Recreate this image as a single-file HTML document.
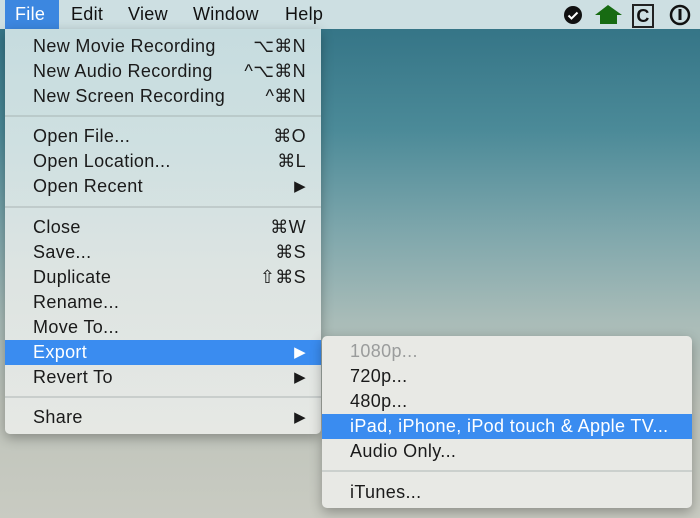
<!DOCTYPE html>
<html><head><style>
body{margin:0;width:700px;height:518px;overflow:hidden;font-family:"Liberation Sans",sans-serif;position:relative;
background:linear-gradient(180deg,#2f6f82 0%,#4b8a98 25%,#7fa7ac 45%,#a9bcb8 62%,#bfc4bb 78%,#c9cbc2 100%);}
.bar{position:absolute;left:0;top:0;width:700px;height:29px;background:#cddfe2;font-size:18px;color:#111;letter-spacing:0.3px}
.bar span{position:absolute;top:4px}
.file{position:absolute;left:5px;top:0;width:54px;height:29px;background:#3c87e0;color:#fff}
.menu{position:absolute;border-radius:5px;box-shadow:0 4px 12px rgba(0,0,0,.3);font-size:18px;color:#1a1a1a;letter-spacing:0.35px}
.it{position:absolute;left:0;right:0;height:25px;line-height:25px}
.it .t{position:absolute;left:28px}
.it .k{position:absolute;right:15px}
.it .a{position:absolute;right:15px;font-size:15px}
.hl{background:#3a8cf0;color:#fff}
.sep{position:absolute;left:0;right:0;height:2px;background:rgba(160,170,170,.4)}
</style></head><body>
<div class="bar">
<div class="file"></div>
<span style="left:15px;color:#fff">File</span>
<span style="left:71px">Edit</span>
<span style="left:128px">View</span>
<span style="left:193px">Window</span>
<span style="left:285px">Help</span>
<svg style="position:absolute;left:563px;top:5px" width="20" height="20"><circle cx="10" cy="10" r="9" fill="#111"/><path d="M5.5 10.5l3 3 6-6" stroke="#fff" stroke-width="2" fill="none"/></svg>
<svg style="position:absolute;left:594px;top:4px" width="30" height="20"><path d="M1 11L14 1 28 11H23V20H6V11Z" fill="#176b12"/></svg>
<div style="position:absolute;left:632px;top:4px;width:18px;height:20px;border:2px solid #222;font-size:18px;line-height:20px;text-align:center;box-sizing:content-box;font-weight:bold">C</div>
<svg style="position:absolute;left:669px;top:4px" width="22" height="22"><circle cx="11" cy="11" r="9" stroke="#111" stroke-width="2.5" fill="none"/><rect x="9.5" y="5" width="3" height="11" fill="#111"/></svg>
</div>
<div class="menu" style="left:5px;top:29px;width:316px;height:405px;border-radius:0 0 5px 5px;background:linear-gradient(180deg,#c6dcdf 0%,#cfe0e1 30%,#dde4e2 60%,#e6e8e4 100%)">
<div class="it" style="top:5px"><span class="t">New Movie Recording</span><span class="k">⌥⌘N</span></div>
<div class="it" style="top:30px"><span class="t">New Audio Recording</span><span class="k">^⌥⌘N</span></div>
<div class="it" style="top:55px"><span class="t">New Screen Recording</span><span class="k">^⌘N</span></div>
<div class="sep" style="top:86px"></div>
<div class="it" style="top:95px"><span class="t">Open File...</span><span class="k">⌘O</span></div>
<div class="it" style="top:120px"><span class="t">Open Location...</span><span class="k">⌘L</span></div>
<div class="it" style="top:145px"><span class="t">Open Recent</span><span class="a">▶</span></div>
<div class="sep" style="top:177px"></div>
<div class="it" style="top:186px"><span class="t">Close</span><span class="k">⌘W</span></div>
<div class="it" style="top:211px"><span class="t">Save...</span><span class="k">⌘S</span></div>
<div class="it" style="top:236px"><span class="t">Duplicate</span><span class="k">⇧⌘S</span></div>
<div class="it" style="top:261px"><span class="t">Rename...</span></div>
<div class="it" style="top:286px"><span class="t">Move To...</span></div>
<div class="it hl" style="top:311px"><span class="t">Export</span><span class="a">▶</span></div>
<div class="it" style="top:336px"><span class="t">Revert To</span><span class="a">▶</span></div>
<div class="sep" style="top:367px"></div>
<div class="it" style="top:376px"><span class="t">Share</span><span class="a">▶</span></div>
</div>
<div class="menu" style="left:322px;top:336px;width:370px;height:172px;background:#e8e9e5">
<div class="it" style="top:3px;color:#9a9c9c"><span class="t">1080p...</span></div>
<div class="it" style="top:28px"><span class="t">720p...</span></div>
<div class="it" style="top:53px"><span class="t">480p...</span></div>
<div class="it hl" style="top:78px"><span class="t">iPad, iPhone, iPod touch &amp; Apple TV...</span></div>
<div class="it" style="top:103px"><span class="t">Audio Only...</span></div>
<div class="sep" style="top:134px"></div>
<div class="it" style="top:144px"><span class="t">iTunes...</span></div>
</div>
</body></html>
